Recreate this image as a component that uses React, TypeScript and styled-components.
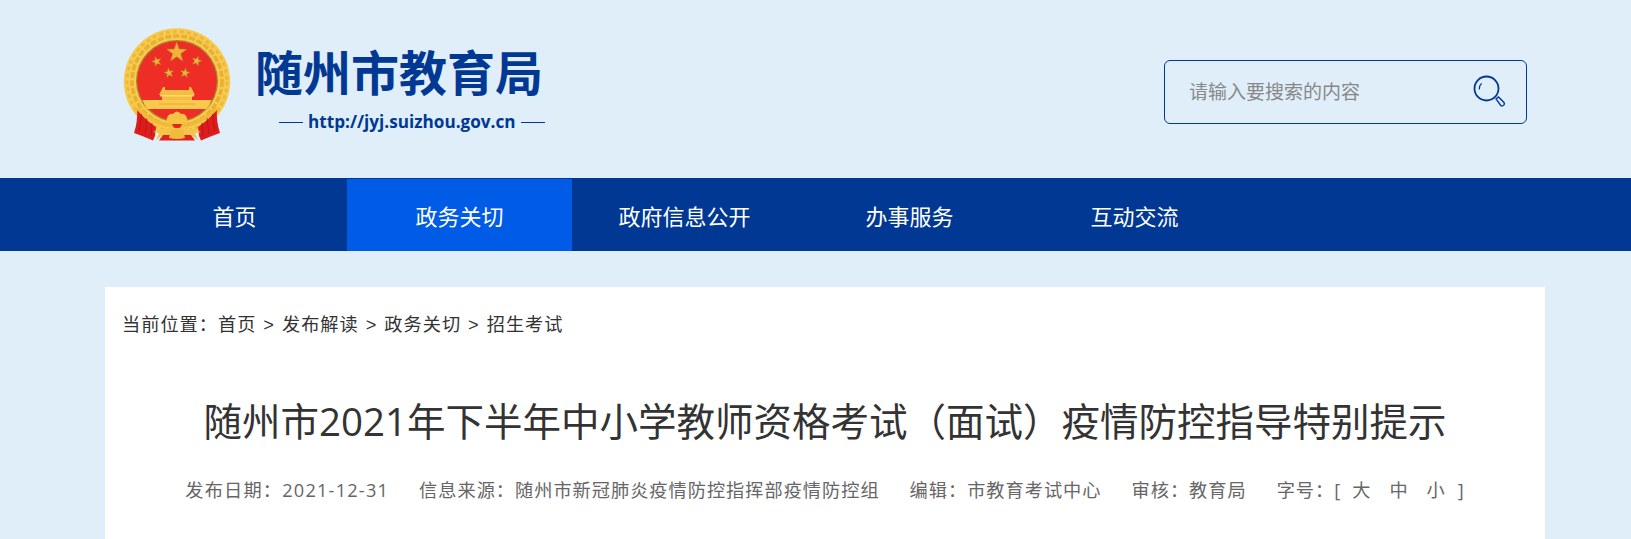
import React from 'react'
import styled, { createGlobalStyle } from 'styled-components'

const GlobalStyle = createGlobalStyle`
  html, body {
    margin: 0;
    padding: 0;
    background: #dfeef8;
    font-family: "Noto Sans CJK SC", "Noto Sans", sans-serif;
    overflow: hidden;
  }
`

const Page = styled.div`
  width: 1631px;
  height: 539px;
  overflow: hidden;
`

const Header = styled.header`
  height: 178px;
  box-sizing: border-box;
  padding: 28px 104px 0 123px;
  display: flex;
  justify-content: space-between;
`

const LogoGroup = styled.a`
  display: flex;
  gap: 24px;
  height: 120px;
`

const LogoText = styled.div`
  display: flex;
  flex-direction: column;
  padding-top: 13px;
`

const SiteName = styled.div`
  font-size: 48px;
  line-height: 58px;
  font-weight: 700;
  color: #003893;
`

const SiteUrl = styled.div`
  display: flex;
  align-items: center;
  gap: 5px;
  margin: 12px 0 0 24px;
  font-family: "Open Sans", "Liberation Sans", sans-serif;
  font-size: 17.15px;
  line-height: 22px;
  font-weight: 700;
  color: #003893;
  &::before, &::after {
    content: '';
    width: 24px;
    height: 1px;
    background: #003893;
  }
`

const SearchBox = styled.form`
  width: 363px;
  height: 64px;
  margin-top: 32px;
  box-sizing: border-box;
  border: 1px solid #003893;
  border-radius: 6px;
  display: flex;
  align-items: center;
  justify-content: space-between;
  padding: 0 20px 0 24px;
`

const SearchInput = styled.input`
  flex: 1;
  min-width: 0;
  border: 0;
  outline: 0;
  background: transparent;
  padding: 0 0 3px;
  font: 19px "Noto Sans CJK SC", sans-serif;
  color: #333;
  &::placeholder {
    color: #888;
    opacity: 1;
  }
`

const SearchButton = styled.button`
  border: 0;
  background: none;
  padding: 0;
  width: 34px;
  height: 34px;
  display: block;
`

const Nav = styled.nav`
  height: 73px;
  background: #003893;
  display: flex;
  padding-left: 122px;
`

const NavItem = styled.a<{ $active?: boolean }>`
  width: 225px;
  margin-top: 1px;
  display: flex;
  align-items: center;
  justify-content: center;
  font-size: 22px;
  color: #fff;
  background: ${(p) => (p.$active ? '#005be6' : 'transparent')};
`

const Card = styled.main`
  width: 1440px;
  height: 300px;
  margin: 36px 0 0 105px;
  background: #fff;
  box-sizing: border-box;
  padding: 0 18px;
`

const Crumbs = styled.div`
  padding-top: 21px;
  margin-left: -1px;
  font-family: "Open Sans", "Noto Sans CJK SC", sans-serif;
  font-size: 18.2px;
  line-height: 32px;
  letter-spacing: 1px;
  color: #333;
`

const Sep = styled.span`
  margin: 0 7px;
  font-family: "Liberation Sans", sans-serif;
`

const Title = styled.h1`
  margin: 48px 0 0;
  text-align: center;
  font-family: "Open Sans", "Noto Sans CJK SC", sans-serif;
  font-size: 38.5px;
  line-height: 64px;
  font-weight: 400;
  color: #333;
`

const Meta = styled.div`
  margin-top: 21px;
  display: flex;
  justify-content: center;
  gap: 30px;
  font-family: "Open Sans", "Noto Sans CJK SC", sans-serif;
  font-size: 18.2px;
  line-height: 32px;
  letter-spacing: 1px;
  color: #666;
`

const DateText = styled.span`
  letter-spacing: 1.2px;
`

const SizeLinks = styled.span`
  display: inline-flex;
  gap: 11px;
`

const SizeLink = styled.a`
  margin-right: 7px;
  &:last-of-type {
    margin-right: 1px;
  }
`

const Star = ({ x, y, r, rot = 0 }: { x: number; y: number; r: number; rot?: number }) => {
  const pts = Array.from({ length: 10 }, (_, i) => {
    const a = (-90 + rot + i * 36) * (Math.PI / 180)
    const d = i % 2 ? r * 0.4 : r
    return `${(x + d * Math.cos(a)).toFixed(2)},${(y + d * Math.sin(a)).toFixed(2)}`
  }).join(' ')
  return <polygon points={pts} fill="#f0b23a" stroke="#b98a2c" strokeWidth=".5" />
}

function Emblem() {
  return (
    <svg width="108" height="114" viewBox="0 0 108 114">
      <defs>
        <filter id="soft" x="-5%" y="-5%" width="110%" height="110%">
          <feGaussianBlur stdDeviation=".5" />
        </filter>
      </defs>
      <g filter="url(#soft)">
        {/* wheat ring */}
        <circle cx="54" cy="53.5" r="53.2" fill="#f7cb4e" />
        <circle cx="54" cy="53.5" r="50" fill="none" stroke="#eeb83c" strokeWidth="3" strokeDasharray="4 3" />
        <circle cx="54" cy="53" r="45" fill="none" stroke="#e9ae33" strokeWidth="3.5" strokeDasharray="6 2" />
        <circle cx="54" cy="53" r="41" fill="#a98230" />
        {/* red field */}
        <circle cx="54" cy="53" r="39.7" fill="#ee2d25" />
        <Star x={53.7} y={24.5} r={10.5} />
        <Star x={33.7} y={33.5} r={5} rot={-18} />
        <Star x={73.7} y={33} r={5} rot={18} />
        <Star x={46} y={45} r={5} rot={-10} />
        <Star x={62} y={45} r={5} rot={10} />
        {/* gate */}
        <path d="M40 59 H42 V62 H66 V59 H68 L72 67 H69 V72 H39 V67 H36 Z" fill="#f5bd42" />
        <path d="M37 67 H71 V68.5 H37 Z" fill="#fbdc70" />
        <path d="M19.5 72 H88.5 Q87 77 83.5 81 H24.5 Q21 77 19.5 72 Z" fill="#f9c94e" />
        <path d="M36 75 H72 V77 H36 Z" fill="#efb840" />
        {/* drapes */}
        <path d="M14 81 Q21 91 33 99 L32 108 L30 112.5 Q20 108 11 105 Q15 93 14 81 Z" fill="#de1f1c" />
        <path d="M94 81 Q87 91 75 99 L76 108 L78 112.5 Q88 108 97 105 Q93 93 94 81 Z" fill="#de1f1c" />
        <path d="M19 84 L16 103 M24 90 L22 106 M29 95 L28 108" stroke="#b9151a" strokeWidth="1" fill="none" />
        <path d="M89 84 L92 103 M84 90 L86 106 M79 95 L80 108" stroke="#b9151a" strokeWidth="1" fill="none" />
        {/* gold sash and knot */}
        <path d="M14 80 Q30 96 46 97 L54 99 L62 97 Q78 96 94 80" fill="none" stroke="#f2b839" strokeWidth="3.4" />
        <path d="M44 90 Q46 85 50 86 Q54 81 58 86 Q62 85 64 90 Q66 95 60 96 H48 Q42 95 44 90 Z" fill="#f6c444" />
        <path d="M49 96 H59 L57 100 H51 Z" fill="#e3271f" />
        {/* lower ribbons */}
        <path d="M30 104 Q42 99 54 100 Q66 99 78 104 L72 105 L75 112 L68 107 H40 L33 112 L36 105 Z" fill="#f4c448" />
        <path d="M40 107 H68 L72 112.5 H36 Z" fill="#e0231e" />
        <path d="M48 102 Q54 100 60 102 L62 110 Q54 112 46 110 Z" fill="#f2bb3e" />
      </g>
    </svg>
  )
}

function SearchIcon() {
  return (
    <svg width="34" height="34" viewBox="0 0 34 34" fill="none" stroke="#003893">
      <circle cx="14.5" cy="13.5" r="12" strokeWidth="1.8" />
      <path d="M7.3 14.5 Q7.1 10.5 9.7 8.4" strokeWidth="1.2" />
      <path d="M24 24 L26.5 22 L32 27.5 Q33 29 31.7 30.3 Q30 31.5 28.8 30.5 Z" strokeWidth="1.4" />
    </svg>
  )
}

const NAV_ITEMS = ['首页', '政务关切', '政府信息公开', '办事服务', '互动交流']

export default function App() {
  return (
    <Page>
      <GlobalStyle />
      <Header>
        <LogoGroup>
          <Emblem />
          <LogoText>
            <SiteName>随州市教育局</SiteName>
            <SiteUrl>http://jyj.suizhou.gov.cn</SiteUrl>
          </LogoText>
        </LogoGroup>
        <SearchBox>
          <SearchInput placeholder="请输入要搜索的内容" />
          <SearchButton type="button" aria-label="搜索">
            <SearchIcon />
          </SearchButton>
        </SearchBox>
      </Header>
      <Nav>
        {NAV_ITEMS.map((label, i) => (
          <NavItem key={label} $active={i === 1}>
            {label}
          </NavItem>
        ))}
      </Nav>
      <Card>
        <Crumbs>
          当前位置：首页<Sep>&gt;</Sep>发布解读<Sep>&gt;</Sep>政务关切<Sep>&gt;</Sep>招生考试
        </Crumbs>
        <Title>随州市2021年下半年中小学教师资格考试（面试）疫情防控指导特别提示</Title>
        <Meta>
          <DateText>发布日期：2021-12-31</DateText>
          <span>信息来源：随州市新冠肺炎疫情防控指挥部疫情防控组</span>
          <span>编辑：市教育考试中心</span>
          <span>审核：教育局</span>
          <span>
            字号：
            <SizeLinks>
              <span>[</span>
              <SizeLink>大</SizeLink>
              <SizeLink>中</SizeLink>
              <SizeLink>小</SizeLink>
              <span>]</span>
            </SizeLinks>
          </span>
        </Meta>
      </Card>
    </Page>
  )
}
